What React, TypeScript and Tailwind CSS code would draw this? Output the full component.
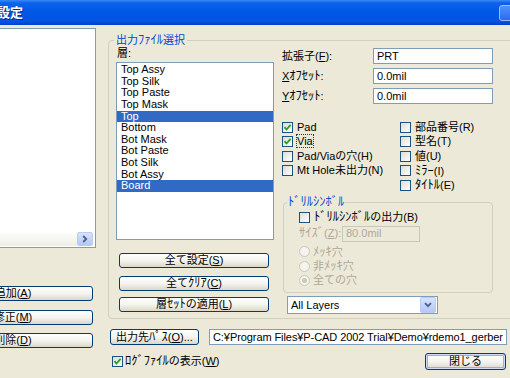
import React from 'react';

const layers = [
  'Top Assy',
  'Top Silk',
  'Top Paste',
  'Top Mask',
  'Top',
  'Bottom',
  'Bot Mask',
  'Bot Paste',
  'Bot Silk',
  'Bot Assy',
  'Board',
];
const selected = ['Top', 'Board'];

function U({ children }: { children: React.ReactNode }) {
  return <span className="underline underline-offset-[1px] decoration-[1px]">{children}</span>;
}

// half-width katakana run, a little larger so it reads like the XP UI font
function K({ children }: { children: React.ReactNode }) {
  return <span className="text-[12.5px]">{children}</span>;
}

function XpButton({
  className = '',
  children,
  isDefault = false,
}: {
  className?: string;
  children: React.ReactNode;
  isDefault?: boolean;
}) {
  return (
    <div
      className={`flex shrink-0 items-center justify-center rounded-[3px] border border-[#003C74] bg-linear-to-b from-white via-[#F5F4EF] to-[#DCD7CB] text-[11px] leading-none whitespace-nowrap text-black ${
        isDefault ? 'shadow-[inset_0_0_0_1px_#CEDDF8,inset_0_0_0_2px_#8FB2EE]' : ''
      } ${className}`}
    >
      {children}
    </div>
  );
}

function Check({ checked = false }: { checked?: boolean }) {
  return (
    <span className="flex h-[11px] w-[11px] shrink-0 items-center justify-center border border-[#1C5180] bg-linear-to-br from-[#DCDCD7] to-white">
      {checked && (
        <svg width="9" height="9" viewBox="0 0 9 9">
          <path d="M1.5 4.2 L3.5 6.5 L7.6 1.8" stroke="#21A121" strokeWidth="1.8" fill="none" />
        </svg>
      )}
    </span>
  );
}

function CheckRow({
  checked = false,
  children,
}: {
  checked?: boolean;
  children: React.ReactNode;
}) {
  return (
    <div className="flex h-[14.5px] items-center gap-[4px] whitespace-nowrap">
      <Check checked={checked} />
      <span>{children}</span>
    </div>
  );
}

function Radio({ checked = false, children }: { checked?: boolean; children: React.ReactNode }) {
  return (
    <div className="flex h-[14.5px] items-center gap-[3px] whitespace-nowrap text-[#ACA899]">
      <span className="flex h-[11px] w-[11px] items-center justify-center rounded-full border border-[#CAC8BB] bg-[#F4F3EE]">
        {checked && <span className="h-[5px] w-[5px] rounded-full bg-[#CAC8BB]" />}
      </span>
      <span>{children}</span>
    </div>
  );
}

function TextBox({ value, className = '' }: { value: string; className?: string }) {
  return (
    <div
      className={`flex h-[16px] items-center overflow-hidden border border-[#7F9DB9] bg-white pl-[3px] whitespace-nowrap ${className}`}
    >
      {value}
    </div>
  );
}

export default function App() {
  return (
    <div className="h-[378px] w-[510px] overflow-hidden bg-[#ECE9D8] font-['Liberation_Sans','Noto_Sans_CJK_JP',sans-serif] text-[11px] leading-none text-black select-none">
      {/* title bar */}
      <div className="flex h-[25px] items-center bg-[linear-gradient(#3A8AF7_0%,#0B62EA_12%,#0058E6_45%,#0054E2_85%,#003FCB_100%)]">
        <span className="ml-[-3px] text-[13px] font-bold text-white [text-shadow:1px_1px_0_#0B2A8A]">設定</span>
        <div className="mr-[-11px] ml-auto h-[16px] w-[22px] rounded-[3px] border border-[#9DBDF8] bg-linear-to-b from-[#4F91F8] to-[#2A6AF0]" />
      </div>

      <div className="flex">
        {/* left column (cut off by the window edge) */}
        <div className="flex w-[96px] shrink-0 flex-col">
          <div className="mt-[3px] ml-[-60px] flex h-[220px] w-[156px] flex-col border border-[#7F9DB9] bg-white">
            <div className="flex-1" />
            <div className="mb-[1px] flex h-[14px]">
              <div className="flex-1 bg-linear-to-b from-[#FEFEFB] to-[#EFEDE4]" />
              <div className="mr-[2px] flex w-[16px] items-center justify-center rounded-[2px] border border-[#B8CBF3] bg-linear-to-b from-[#D7E3FD] to-[#B4C8F6]">
                <svg width="6" height="8" viewBox="0 0 6 8">
                  <path d="M1.2 1 L4.2 4 L1.2 7" stroke="#4D6185" strokeWidth="1.8" fill="none" />
                </svg>
              </div>
            </div>
          </div>
          <XpButton className="mt-[38px] ml-[-67px] h-[15px] w-[160px]">
            追加(<U>A</U>)
          </XpButton>
          <XpButton className="mt-[9px] ml-[-67px] h-[15px] w-[160px]">
            修正(<U>M</U>)
          </XpButton>
          <XpButton className="mt-[8px] ml-[-67px] h-[15px] w-[160px]">
            削除(<U>D</U>)
          </XpButton>
        </div>

        {/* main area */}
        <div className="ml-[12px] flex w-[402px] shrink-0 flex-col">
          <fieldset className="mt-[9px] h-[285px] w-[420px] rounded-[4px] border border-[#D0D0BF]">
            <legend className="ml-[5px] h-[12px] px-[2px] leading-[12px] text-[#0046D5]">
              出力<K>ﾌｧｲﾙ</K>選択
            </legend>
            <div className="flex">
              {/* layer list */}
              <div className="ml-[7px] flex w-[158px] shrink-0 flex-col">
                <div className="h-[14px] pl-[1px] leading-[14px]">層:</div>
                <div className="mt-[2px] h-[178px] border border-[#7F9DB9] bg-white pt-[1px]">
                  {layers.map((l) => (
                    <div
                      key={l}
                      className={`h-[11.65px] pl-[4px] leading-[11.65px] whitespace-nowrap ${
                        selected.includes(l) ? 'bg-[#316AC5] text-white' : ''
                      }`}
                    >
                      {l}
                    </div>
                  ))}
                </div>
                <XpButton className="mt-[13px] ml-[3px] h-[15px] w-[150px]">
                  全て設定(<U>S</U>)
                </XpButton>
                <XpButton className="mt-[8px] ml-[3px] h-[15px] w-[150px]">
                  全て<K>ｸﾘｱ</K>(<U>C</U>)
                </XpButton>
                <XpButton className="mt-[6px] ml-[3px] h-[15px] w-[150px]">
                  層<K>ｾｯﾄ</K>の適用(<U>L</U>)
                </XpButton>
              </div>

              {/* options */}
              <div className="ml-[8px] flex w-[228px] shrink-0 flex-col">
                <div className="mt-[2px] flex h-[16px] items-center">
                  <span className="w-[91px]">
                    拡張子(<U>F</U>):
                  </span>
                  <TextBox value="PRT" className="w-[120px]" />
                </div>
                <div className="mt-[4px] flex h-[16px] items-center">
                  <span className="w-[91px]">
                    <U>X</U>
                    <K>ｵﾌｾｯﾄ</K>:
                  </span>
                  <TextBox value="0.0mil" className="w-[120px]" />
                </div>
                <div className="mt-[4px] flex h-[16px] items-center">
                  <span className="w-[91px]">
                    <U>Y</U>
                    <K>ｵﾌｾｯﾄ</K>:
                  </span>
                  <TextBox value="0.0mil" className="w-[120px]" />
                </div>

                <div className="mt-[16px] grid grid-cols-[118px_1fr]">
                  <CheckRow checked>Pad</CheckRow>
                  <CheckRow>部品番号(R)</CheckRow>
                  <CheckRow checked>
                    <span className="outline-1 outline-dotted outline-[#333]">Via</span>
                  </CheckRow>
                  <CheckRow>型名(T)</CheckRow>
                  <CheckRow>Pad/Viaの穴(H)</CheckRow>
                  <CheckRow>値(U)</CheckRow>
                  <CheckRow>Mt Hole未出力(N)</CheckRow>
                  <CheckRow>
                    <K>ﾐﾗｰ</K>(I)
                  </CheckRow>
                  <div />
                  <CheckRow>
                    <K>ﾀｲﾄﾙ</K>(E)
                  </CheckRow>
                </div>

                <fieldset className="mt-[3.5px] ml-[1px] h-[97px] w-[210px] rounded-[4px] border border-[#D0D0BF]">
                  <legend className="ml-[3px] h-[12px] px-[1px] leading-[12px] text-[#0046D5]">
                    <K>ﾄﾞﾘﾙｼﾝﾎﾞﾙ</K>
                  </legend>
                  <div className="flex flex-col pl-[15px]">
                    <div className="mt-[2px]">
                      <CheckRow>
                        <K>ﾄﾞﾘﾙｼﾝﾎﾞﾙ</K>の出力(B)
                      </CheckRow>
                    </div>
                    <div className="mt-[1px] flex h-[16px] items-center">
                      <span className="w-[43px] whitespace-nowrap text-[#ACA899]">
                        <K>ｻｲｽﾞ</K>(<U>Z</U>):
                      </span>
                      <div className="flex h-[16px] w-[78px] items-center border border-[#C9C7BA] bg-[#ECE9D8] pl-[3px] text-[#ACA899]">
                        80.0mil
                      </div>
                    </div>
                    <div className="mt-[3px] flex flex-col">
                      <Radio>
                        <K>ﾒｯｷ</K>穴
                      </Radio>
                      <Radio>
                        非<K>ﾒｯｷ</K>穴
                      </Radio>
                      <Radio checked>全ての穴</Radio>
                    </div>
                  </div>
                </fieldset>

                <div className="mt-[3px] ml-[5px] flex h-[18px] w-[151px] items-center border border-[#7F9DB9] bg-white">
                  <span className="flex-1 pl-[3px]">All Layers</span>
                  <div className="mr-[1px] flex h-[16px] w-[16px] items-center justify-center rounded-[2px] border border-[#B8CBF3] bg-linear-to-b from-[#D7E3FD] to-[#B4C8F6]">
                    <svg width="8" height="6" viewBox="0 0 8 6">
                      <path d="M1 1.2 L4 4.2 L7 1.2" stroke="#4D6185" strokeWidth="1.8" fill="none" />
                    </svg>
                  </div>
                </div>
              </div>
            </div>
          </fieldset>

          {/* output path */}
          <div className="mt-[10px] flex h-[16px] items-center">
            <XpButton className="ml-[2px] h-[16px] w-[89px]">
              出力先<K>ﾊﾟｽ</K>(<U>O</U>)...
            </XpButton>
            <TextBox
              value="C:¥Program Files¥P-CAD 2002 Trial¥Demo¥rdemo1_gerber"
              className="ml-[10px] w-[298px] tracking-[-0.08px]"
            />
          </div>

          <div className="mt-[8px] flex h-[17px] items-center">
            <div className="ml-[4px] flex items-center gap-[2px] whitespace-nowrap">
              <Check checked />
              <span>
                <K>ﾛｸﾞﾌｧｲﾙ</K>の表示(<U>W</U>)
              </span>
            </div>
            <XpButton isDefault className="mr-[4px] ml-auto h-[17px] w-[81px]">
              閉じる
            </XpButton>
          </div>
        </div>
      </div>
    </div>
  );
}
